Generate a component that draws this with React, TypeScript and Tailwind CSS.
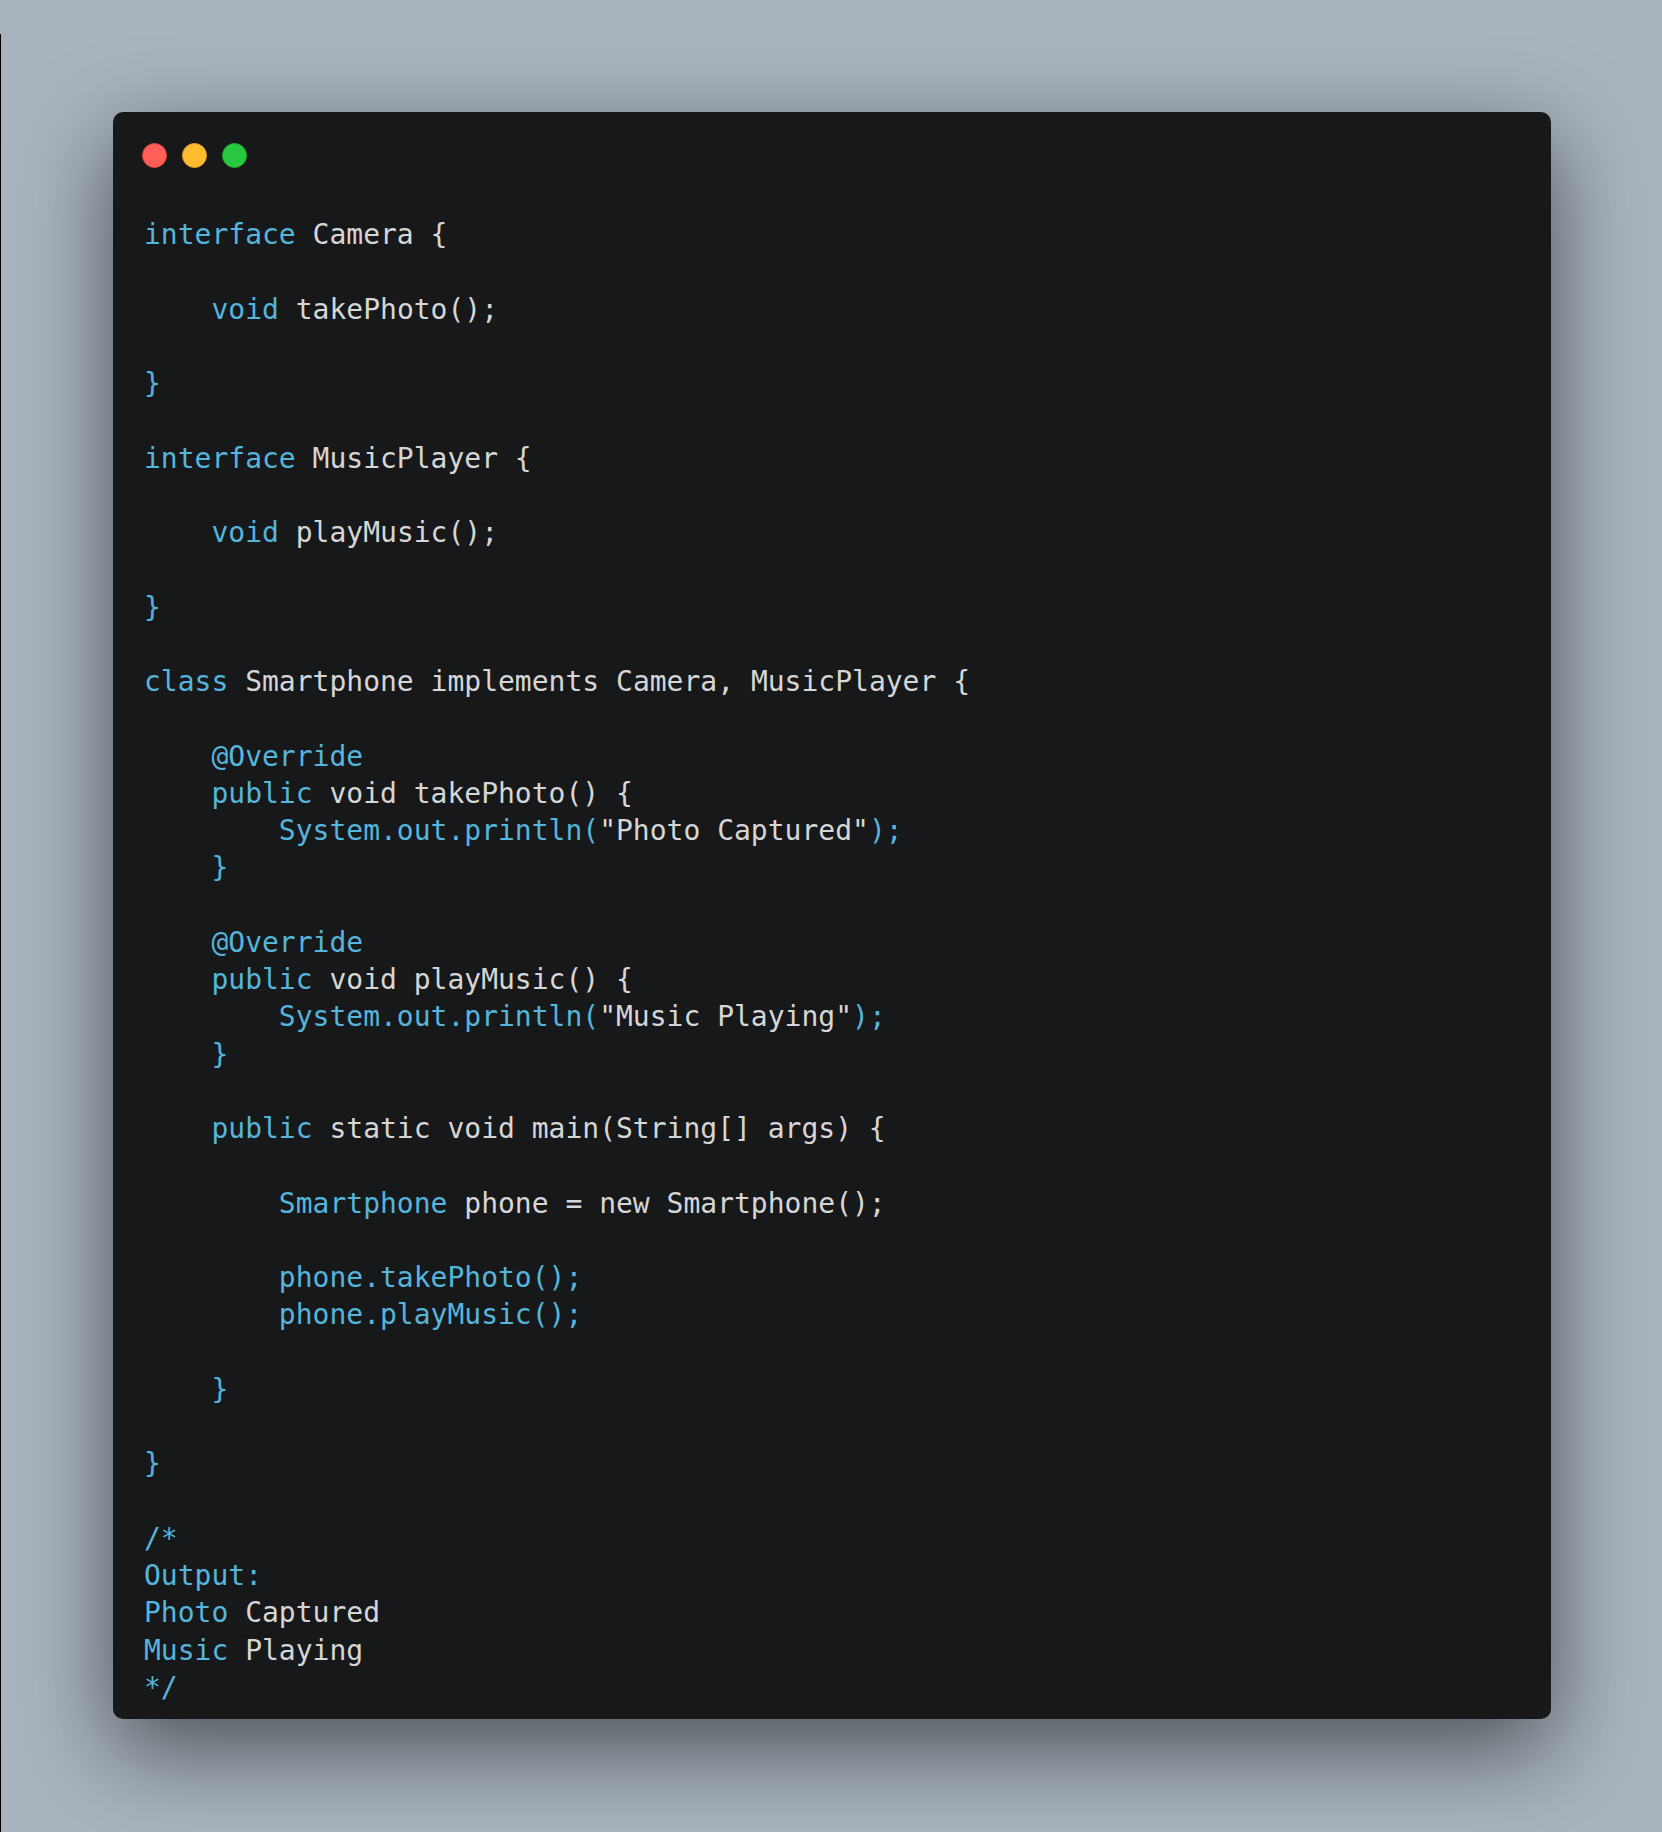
const B = 'text-[#55b5db]';
const W = 'text-[#d6d6d6]';

type Seg = [string, string];

const lines: Seg[][] = [
  [[B, 'interface'], [W, ' Camera {']],
  [],
  [[W, '    '], [B, 'void'], [W, ' takePhoto();']],
  [],
  [[B, '}']],
  [],
  [[B, 'interface'], [W, ' MusicPlayer {']],
  [],
  [[W, '    '], [B, 'void'], [W, ' playMusic();']],
  [],
  [[B, '}']],
  [],
  [[B, 'class'], [W, ' Smartphone implements Camera, MusicPlayer {']],
  [],
  [[B, '    @Override']],
  [[B, '    public'], [W, ' void takePhoto() {']],
  [[B, '        System.out.println('], [W, '"Photo Captured"'], [B, ');']],
  [[B, '    }']],
  [],
  [[B, '    @Override']],
  [[B, '    public'], [W, ' void playMusic() {']],
  [[B, '        System.out.println('], [W, '"Music Playing"'], [B, ');']],
  [[B, '    }']],
  [],
  [[B, '    public'], [W, ' static void main(String[] args) {']],
  [],
  [[B, '        Smartphone'], [W, ' phone = new Smartphone();']],
  [],
  [[B, '        phone.takePhoto();']],
  [[B, '        phone.playMusic();']],
  [],
  [[B, '    }']],
  [],
  [[B, '}']],
  [],
  [[B, '/*']],
  [[B, 'Output:']],
  [[B, 'Photo'], [W, ' Captured']],
  [[B, 'Music'], [W, ' Playing']],
  [[B, '*/']],
];

export default function App() {
  return (
    <div className="h-[1832px] bg-[#a8b3be] pt-[34px] overflow-hidden">
      <div className="h-full border-l border-black pt-[78px] pl-[112px]">
        <div className="w-[1438px] rounded-[10px] bg-[#17181a] pt-[31px] pl-[29px] pb-[13px] shadow-[0_30px_90px_rgba(0,0,0,0.55)]">
          <div className="flex gap-[15px]">
            <span className="w-[25px] h-[25px] rounded-full bg-[#ff5f57] border border-[#e0443e]" />
            <span className="w-[25px] h-[25px] rounded-full bg-[#febc2e] border border-[#dea123]" />
            <span className="w-[25px] h-[25px] rounded-full bg-[#28c840] border border-[#1aab29]" />
          </div>
          <pre className="mt-[48px] ml-[2px] [font-family:'DejaVu_Sans_Mono',monospace] text-[28px] leading-[37.25px]">
            {lines.map((segs, i) => (
              <div key={i} className="h-[37.25px]">
                {segs.map(([c, t], j) => (
                  <span key={j} className={c}>{t}</span>
                ))}
              </div>
            ))}
          </pre>
        </div>
      </div>
    </div>
  );
}
